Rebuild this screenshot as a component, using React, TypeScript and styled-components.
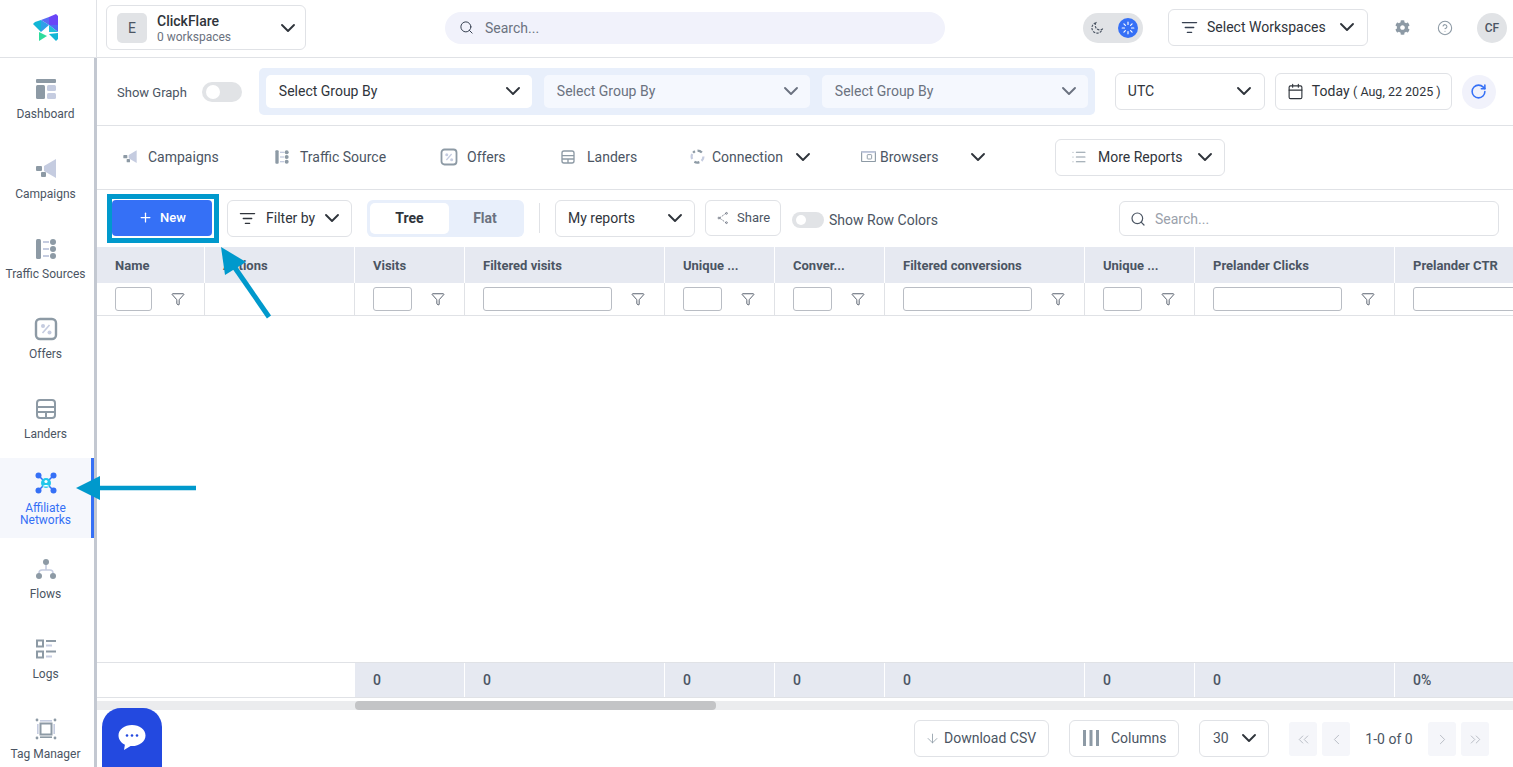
import React from "react";
import styled, { createGlobalStyle } from "styled-components";
import {
  ArrowDown,
  Calendar,
  ChevronDown,
  ChevronLeft,
  ChevronRight,
  ChevronsLeft,
  ChevronsRight,
  CircleHelp,
  Funnel,
  List,
  ListFilter,
  Plus,
  RotateCw,
  Search,
} from "lucide-react";
import { FaCog } from "react-icons/fa";

const dark = "#8d9aa5";
const light = "#c5cce0";
const blue = "#3570f6";
const line = "#e0e2e6";
const headBg = "#e6e9f1";
const textColor = "#4b5563";
const strong = "#2f343b";

const GlobalStyle = createGlobalStyle`
  html, body {
    margin: 0;
    height: 100%;
    overflow: hidden;
    background: #fff;
    font-family: Roboto, "Liberation Sans", sans-serif;
  }
  * { box-sizing: border-box; }
`;

const Page = styled.div`
  position: relative;
  width: 1513px;
  height: 767px;
  overflow: hidden;
  display: flex;
  flex-direction: column;
`;

// Shared chevron: drawn at 24px but takes the room of a 20px one
const Chevron = styled(ChevronDown).attrs({ size: 24, strokeWidth: 1.9 })`
  flex: none;
  margin: -2px;
`;

// Top bar
const TopBar = styled.header`
  height: 58px;
  flex: none;
  display: flex;
  align-items: center;
  padding-bottom: 2px;
  border-bottom: 1px solid ${line};
`;

const LogoCell = styled.div`
  width: 97px;
  height: 57px;
  flex: none;
  display: flex;
  align-items: center;
  justify-content: center;
  border-right: 1px solid ${line};
  margin-bottom: -2px;
  padding: 0 3px 2px 0;
`;

const OrgBox = styled.div`
  width: 200px;
  height: 45px;
  margin-left: 9px;
  display: flex;
  align-items: center;
  padding: 0 7px 0 10px;
  border: 1px solid ${line};
  border-radius: 6px;
`;

const OrgBadge = styled.div`
  width: 30px;
  height: 30px;
  border-radius: 5px;
  background: #e1e3e6;
  color: ${textColor};
  font-size: 14px;
  display: flex;
  align-items: center;
  justify-content: center;
  margin-right: 10px;
`;

const OrgText = styled.div`
  flex: 1;
  display: flex;
  flex-direction: column;
  padding-top: 3px;
`;

const OrgName = styled.span`
  font-size: 14px;
  line-height: 16px;
  font-weight: 500;
  color: ${strong};
`;

const OrgSub = styled.span`
  font-size: 12px;
  line-height: 16px;
  color: #6b7280;
`;

const GlobalSearch = styled.div`
  width: 500px;
  height: 32px;
  margin-left: 139px;
  display: flex;
  align-items: center;
  gap: 11px;
  padding-left: 14px;
  border-radius: 16px;
  background: #f1f2fb;
  color: #6b7280;
  font-size: 14px;
  svg { color: #374151; }
`;

const ThemeToggle = styled.div`
  width: 60px;
  height: 30px;
  margin-left: 138px;
  padding: 0 5px 0 7px;
  display: flex;
  align-items: center;
  justify-content: space-between;
  border-radius: 15px;
  background: #e1e3e6;
`;

const SunDot = styled.div`
  width: 20px;
  height: 20px;
  border-radius: 50%;
  background: ${blue};
  display: flex;
  align-items: center;
  justify-content: center;
`;

const OutlineBox = styled.div<{ $w: number; $h?: number; $pad?: string; $gap?: number }>`
  width: ${(p) => p.$w}px;
  height: ${(p) => p.$h ?? 37}px;
  flex: none;
  display: flex;
  align-items: center;
  gap: ${(p) => p.$gap ?? 0}px;
  padding: ${(p) => p.$pad ?? "0 12px"};
  border: 1px solid ${line};
  border-radius: 6px;
  background: #fff;
  color: ${strong};
  font-size: 14px;
  white-space: nowrap;
  svg { flex: none; }
`;

const Grow = styled.span<{ $ml?: number }>`
  flex: 1;
  margin-left: ${(p) => p.$ml ?? 0}px;
`;

const WorkspaceBox = styled(OutlineBox)`
  margin-left: 25px;
  svg.lead { color: #374151; }
`;

const GearWrap = styled.div`
  margin-left: 27px;
  display: flex;
  color: ${dark};
`;

const HelpWrap = styled.div`
  margin-left: 27px;
  display: flex;
  color: ${dark};
`;

const UserBadge = styled.div`
  width: 30px;
  height: 30px;
  margin-left: 24px;
  border-radius: 50%;
  background: #e1e3e6;
  color: ${textColor};
  font-size: 12px;
  font-weight: 500;
  display: flex;
  align-items: center;
  justify-content: center;
`;

// Sidebar
const Body = styled.div`
  flex: 1;
  display: flex;
  min-height: 0;
`;

const Sidebar = styled.nav`
  width: 97px;
  flex: none;
  overflow: hidden;
  border-right: 3px solid #c3c8d1;
`;

const SideItem = styled.div<{ $active?: boolean }>`
  height: 80px;
  display: flex;
  flex-direction: column;
  align-items: center;
  justify-content: center;
  gap: 7px;
  padding-top: 1px;
  font-size: 12px;
  line-height: 12px;
  text-align: center;
  color: ${(p) => (p.$active ? blue : textColor)};
  background: ${(p) => (p.$active ? "#f5f7fc" : "#fff")};
  border-right: 3px solid ${(p) => (p.$active ? blue : "transparent")};
  svg { flex: none; }
`;

// Main area
const Main = styled.main`
  flex: 1;
  min-width: 0;
  display: flex;
  flex-direction: column;
`;

const FilterBar = styled.div`
  height: 68px;
  flex: none;
  display: flex;
  align-items: center;
  padding-left: 20px;
  border-bottom: 1px solid ${line};
`;

const GraphLabel = styled.span`
  font-size: 13px;
  color: ${textColor};
  margin-top: 1px;
  margin-right: 15px;
`;

const Switch = styled.div<{ $w: number; $h: number }>`
  width: ${(p) => p.$w}px;
  height: ${(p) => p.$h}px;
  flex: none;
  border-radius: ${(p) => p.$h / 2}px;
  background: #e1e3e6;
  padding: 3px 4px;
  display: flex;
  &::before {
    content: "";
    width: ${(p) => p.$h - 6}px;
    height: ${(p) => p.$h - 6}px;
    border-radius: 50%;
    background: #fff;
  }
`;

const GroupPanel = styled.div`
  width: 836px;
  height: 47px;
  margin-left: 17px;
  margin-right: 20px;
  padding: 7px;
  display: flex;
  gap: 12px;
  background: #e8effb;
  border-radius: 5px;
`;

const GroupSelect = styled.div<{ $off?: boolean }>`
  flex: 1;
  display: flex;
  align-items: center;
  padding: 0 9px 1px 13px;
  border-radius: 5px;
  font-size: 14px;
  background: ${(p) => (p.$off ? "#f5f8fe" : "#fff")};
  color: ${(p) => (p.$off ? "#6b7280" : strong)};
`;

const DateBox = styled(OutlineBox)`
  margin-left: 10px;
`;

const DateSmall = styled.span`
  font-size: 12.5px;
`;

const RefreshButton = styled.div`
  width: 34px;
  height: 34px;
  margin-left: 10px;
  flex: none;
  border-radius: 50%;
  background: #f1f2fb;
  color: ${blue};
  display: flex;
  align-items: center;
  justify-content: center;
`;

const TabBar = styled.div`
  height: 64px;
  flex: none;
  display: flex;
  align-items: center;
  padding-left: 25px;
  border-bottom: 1px solid ${line};
`;

const Tab = styled.div<{ $w: number; $gap: number }>`
  width: ${(p) => p.$w}px;
  flex: none;
  display: flex;
  align-items: center;
  gap: ${(p) => p.$gap}px;
  padding-bottom: 2px;
  font-size: 14px;
  color: ${textColor};
`;

const TabChevron = styled.span<{ $gap: number }>`
  display: flex;
  margin-left: ${(p) => p.$gap}px;
  color: ${strong};
`;

const Toolbar = styled.div`
  height: 57px;
  flex: none;
  display: flex;
  align-items: center;
  padding: 0 14px 1px 10px;
`;

const Highlight = styled.div`
  width: 112px;
  height: 49px;
  flex: none;
  margin-right: 8px;
  padding: 1px 2px 2px 0;
  border: 5px solid #0099cc;
`;

const NewButton = styled.div`
  width: 100%;
  height: 100%;
  border-radius: 4px;
  background: ${blue};
  color: #fff;
  font-size: 13px;
  font-weight: 500;
  display: flex;
  align-items: center;
  justify-content: center;
  gap: 7px;
`;

const ViewSwitch = styled.div`
  width: 157px;
  height: 37px;
  margin-left: 15px;
  padding: 3px;
  flex: none;
  display: flex;
  border-radius: 6px;
  background: #e8effb;
`;

const ViewOption = styled.div<{ $on?: boolean }>`
  width: ${(p) => (p.$on ? 79 : 72)}px;
  display: flex;
  align-items: center;
  justify-content: center;
  border-radius: 5px;
  font-size: 14px;
  font-weight: 700;
  color: ${(p) => (p.$on ? strong : "#6b7280")};
  background: ${(p) => (p.$on ? "#fff" : "transparent")};
`;

const VDivider = styled.div`
  width: 1px;
  height: 30px;
  margin: 0 15px;
  flex: none;
  background: ${line};
`;

const ShareBox = styled(OutlineBox)`
  margin-left: 10px;
  font-size: 13px;
  color: ${textColor};
`;

const RowColors = styled.div`
  display: flex;
  align-items: center;
  gap: 5px;
  margin-left: 11px;
  margin-top: 3px;
  font-size: 14px;
  color: ${textColor};
`;

const TableSearch = styled(OutlineBox)`
  margin-left: auto;
  margin-top: 1px;
  color: #9aa1ab;
  svg { color: #4b5563; }
`;

// Table
const TableArea = styled.div`
  flex: 1;
  min-height: 0;
  overflow: hidden;
  display: flex;
  flex-direction: column;
`;

const Row = styled.div`
  display: grid;
  grid-template-columns: 108px 150px 110px 200px 110px 110px 200px 110px 200px 200px;
  width: 1498px;
  flex: none;
`;

const HeadCell = styled.div`
  height: 36px;
  padding-left: 18px;
  display: flex;
  align-items: center;
  background: ${headBg};
  border-right: 1px solid #fff;
  font-size: 13px;
  font-weight: 700;
  color: ${textColor};
  white-space: nowrap;
`;

const FilterRow = styled(Row)`
  border-bottom: 1px solid ${line};
`;

const FilterCell = styled.div`
  height: 32px;
  padding: 0 19px 0 18px;
  display: flex;
  align-items: center;
  gap: 19px;
  border-right: 1px solid ${line};
  color: #374151;
  svg { flex: none; }
`;

const FilterInput = styled.div`
  flex: 1;
  height: 24px;
  border: 1px solid #b9bdc4;
  border-radius: 3px;
`;

const Spacer = styled.div`
  flex: 1;
`;

const TotalsRow = styled(Row)`
  border-top: 1px solid ${line};
  border-bottom: 1px solid ${line};
`;

const TotalCell = styled.div<{ $blank?: boolean }>`
  height: 34px;
  padding-left: 18px;
  display: flex;
  align-items: center;
  background: ${(p) => (p.$blank ? "#fff" : headBg)};
  border-right: 1px solid ${(p) => (p.$blank ? "transparent" : "#fff")};
  font-size: 14px;
  font-weight: 500;
  color: ${textColor};
`;

const ScrollTrack = styled.div`
  height: 9px;
  margin-top: 3px;
  flex: none;
  background: #ebecee;
  padding-left: 258px;
`;

const ScrollThumb = styled.div`
  width: 361px;
  height: 9px;
  border-radius: 4px;
  background: #c3c4c6;
`;

const Footer = styled.div`
  height: 57px;
  flex: none;
  display: flex;
  align-items: center;
  justify-content: flex-end;
  padding: 0 24px 0 0;
`;

const FootButton = styled(OutlineBox)`
  margin-right: 20px;
  color: ${textColor};
`;

const Pager = styled.div<{ $narrow?: boolean }>`
  width: 28px;
  height: 34px;
  flex: none;
  margin-top: 1px;
  margin-left: ${(p) => (p.$narrow ? 5 : 0)}px;
  background: #f5f6fa;
  border-radius: 3px;
  color: #b5b9c2;
  display: flex;
  align-items: center;
  justify-content: center;
`;

const PageCount = styled.span`
  width: 78px;
  text-align: center;
  font-size: 14px;
  color: ${textColor};
`;

// Things that lie over the page
const ChatBubble = styled.div`
  position: absolute;
  left: 102px;
  top: 708px;
  width: 60px;
  height: 59px;
  background: #2349e0;
  border-radius: 19px 19px 0 0;
  display: flex;
  align-items: center;
  justify-content: center;
  padding-bottom: 2px;
`;

const Annotations = styled.svg`
  position: absolute;
  inset: 0;
  pointer-events: none;
`;

type IconProps = { size?: number };

const Logo = () => (
  <svg width="27" height="28" viewBox="0 0 27 28">
    <polygon points="0,10 2,8 8,6 8,18 5,15" fill="#12b6d6" />
    <polygon points="8,6 16,3 16,11" fill="#5a6cf5" />
    <polygon points="8,6 16,11 8,18" fill="#2f9fe8" />
    <polygon points="16,3 23,0 25,2 25,11 16,11" fill="#6a45f7" />
    <polygon points="16,11 25,11 25,18" fill="#4f6af5" />
    <polygon points="16,11 25,18 16,18" fill="#22c0d8" />
    <polygon points="16,20 25,19 25,25 23,27" fill="#12b6d6" />
    <polygon points="6,18 14,22 6,27" fill="#2edc9c" />
  </svg>
);

const DashboardIcon = ({ size = 24 }: IconProps) => (
  <svg width={size} height={size} viewBox="0 0 24 24">
    <rect x="2" y="2" width="20" height="4" rx="1" fill={dark} />
    <rect x="2" y="8" width="9" height="14" rx="1.5" fill={dark} />
    <rect x="13" y="8" width="9" height="6" rx="1.5" fill={light} />
    <rect x="13" y="16" width="9" height="6" rx="1.5" fill={light} />
  </svg>
);

const CampaignIcon = ({ size = 24 }: IconProps) => (
  <svg width={size} height={size} viewBox="0 0 24 24">
    <polygon points="10,9 22,2 22,21 10,14" fill={light} />
    <rect x="2" y="9" width="6" height="5" rx="1" fill={dark} />
    <rect x="7" y="15" width="5" height="5" rx="1" fill={dark} />
  </svg>
);

const TrafficIcon = ({ size = 24 }: IconProps) => (
  <svg width={size} height={size} viewBox="0 0 24 24">
    <rect x="2" y="2" width="5" height="20" rx="1.5" fill={dark} />
    <rect x="9" y="4" width="6" height="2" fill={light} />
    <rect x="9" y="11" width="6" height="2" fill={light} />
    <rect x="9" y="18" width="6" height="2" fill={light} />
    <circle cx="19" cy="5" r="3" fill={dark} />
    <circle cx="19" cy="12" r="3" fill={dark} />
    <circle cx="19" cy="19" r="3" fill={dark} />
  </svg>
);

const OfferIcon = ({ size = 24 }: IconProps) => (
  <svg width={size} height={size} viewBox="0 0 24 24">
    <rect x="2" y="2" width="20" height="20" rx="4" fill="none" stroke={dark} strokeWidth="2.4" />
    <circle cx="9" cy="9" r="2" fill={light} />
    <circle cx="15.5" cy="15.5" r="2" fill={light} />
    <path d="M15.5 8 8.5 16" stroke={light} strokeWidth="1.6" />
  </svg>
);

const LanderIcon = ({ size = 24 }: IconProps) => (
  <svg width={size} height={size} viewBox="0 0 24 24">
    <rect x="3" y="3" width="18" height="18" rx="3" fill="none" stroke={dark} strokeWidth="2" />
    <path d="M3 10h18M3 15h18M12 15v6" stroke={dark} strokeWidth="2" />
  </svg>
);

const NetworkIcon = () => (
  <svg width="24" height="24" viewBox="0 0 24 24">
    <path d="M4 4 20 20M20 4 4 20" stroke={blue} strokeWidth="1.6" />
    <circle cx="4.5" cy="4.5" r="3" fill={blue} />
    <circle cx="19.5" cy="4.5" r="3" fill={blue} />
    <circle cx="4.5" cy="19.5" r="3" fill={blue} />
    <circle cx="19.5" cy="19.5" r="3" fill={blue} />
    <circle cx="12" cy="12" r="5" fill="#22c8ea" />
    <circle cx="12" cy="10.5" r="1.6" fill="#fff" />
    <path d="M8.8 15.5c.6-2 5.8-2 6.4 0" fill="#fff" />
  </svg>
);

const FlowIcon = () => (
  <svg width="24" height="24" viewBox="0 0 24 24">
    <path d="M12 6v7M5 19v-3a3 3 0 0 1 3-3h8a3 3 0 0 1 3 3v3" fill="none" stroke={light} strokeWidth="1.6" />
    <circle cx="12" cy="5" r="3" fill={dark} />
    <circle cx="5" cy="19" r="3" fill={dark} />
    <circle cx="19" cy="19" r="3" fill={dark} />
  </svg>
);

const LogIcon = () => (
  <svg width="24" height="24" viewBox="0 0 24 24">
    <rect x="3" y="3.5" width="6" height="6" fill="none" stroke={dark} strokeWidth="2" />
    <rect x="3" y="14.5" width="6" height="6" fill="none" stroke={dark} strokeWidth="2" />
    <path d="M12 4h10M12 14.5h10" stroke={dark} strokeWidth="1.8" />
    <path d="M12 8.5h6M12 19.5h6" stroke={light} strokeWidth="1.8" />
  </svg>
);

const TagIcon = () => (
  <svg width="24" height="24" viewBox="0 0 24 24">
    <rect x="6.5" y="6.5" width="11" height="11" fill="none" stroke={dark} strokeWidth="2" />
    <rect x="6" y="3" width="12" height="1.6" fill={light} />
    <rect x="6" y="19.4" width="12" height="1.6" fill={dark} />
    <rect x="3" y="7" width="1.6" height="10" fill={light} />
    <rect x="19.4" y="7" width="1.6" height="10" fill={light} />
    <circle cx="3" cy="3" r="1.4" fill={dark} />
    <circle cx="21" cy="3" r="1.4" fill={dark} />
    <circle cx="3" cy="21" r="1.4" fill={dark} />
    <circle cx="21" cy="21" r="1.4" fill={dark} />
  </svg>
);

const ConnectionIcon = () => (
  <svg width="15" height="15" viewBox="0 0 24 24" fill="none" strokeWidth="3.6">
    <path d="M12 2.5A9.5 9.5 0 0 1 19 5.5" stroke={dark} />
    <path d="M21.5 12a9.5 9.5 0 0 1-3 7" stroke={light} />
    <path d="M15 21a9.5 9.5 0 0 1-8 -.5" stroke={dark} />
    <path d="M3.5 16a9.5 9.5 0 0 1 0 -8" stroke={light} />
    <path d="M5 6a9.5 9.5 0 0 1 3-2.5" stroke={dark} />
  </svg>
);

const BrowserIcon = () => (
  <svg width="15" height="15" viewBox="0 0 24 24" fill="none">
    <rect x="1" y="4" width="22" height="16" rx="1" stroke={dark} strokeWidth="1.8" />
    <path d="M1 5h22" stroke={light} strokeWidth="3" />
    <rect x="10" y="9" width="7" height="7" rx="1" stroke={dark} strokeWidth="1.5" />
  </svg>
);

const MoonIcon = () => (
  <svg width="14" height="14" viewBox="0 0 24 24" fill="none" stroke="#4b5563" strokeWidth="2" strokeDasharray="4 2">
    <path d="M10 3a9 9 0 1 0 11 11 8 8 0 0 1-11-11z" />
  </svg>
);

const SunIcon = () => (
  <svg width="14" height="14" viewBox="0 0 24 24" stroke="#fff" strokeWidth="2" strokeLinecap="round">
    <path d="M12 2v4M12 18v4M2 12h4M18 12h4M5 5l2.5 2.5M16.5 16.5 19 19M5 19l2.5-2.5M16.5 7.5 19 5" />
  </svg>
);

const ShareIcon = () => (
  <svg width="14" height="14" viewBox="0 0 24 24" fill="none" stroke="#6b7280" strokeWidth="1.5">
    <path d="M17 4 6 12l11 8" strokeDasharray="3 2" />
    <circle cx="18" cy="4" r="1.5" />
    <circle cx="5" cy="12" r="1.5" />
    <circle cx="18" cy="20" r="1.5" />
  </svg>
);

const ColumnsIcon = () => (
  <svg width="16" height="16" viewBox="0 0 16 16" fill={dark}>
    <rect x="0" y="0" width="3" height="16" />
    <rect x="6.5" y="0" width="3" height="16" />
    <rect x="13" y="0" width="3" height="16" />
  </svg>
);

const ChatIcon = () => (
  <svg width="30" height="30" viewBox="0 0 30 30">
    <path d="M15 3C7.5 3 1.5 7.5 1.5 13.5c0 4.2 3 7.6 6.4 9.2L7 28l6.6-4c.5 0 1 .1 1.4.1 7.5 0 13.5-4.7 13.5-10.6S22.5 3 15 3z" fill="#fff" />
    <circle cx="10" cy="13.5" r="1.3" fill="#2349e0" />
    <circle cx="15" cy="13.5" r="1.3" fill="#2349e0" />
    <circle cx="20" cy="13.5" r="1.3" fill="#2349e0" />
  </svg>
);

const sideItems = [
  { label: "Dashboard", icon: <DashboardIcon /> },
  { label: "Campaigns", icon: <CampaignIcon /> },
  { label: "Traffic Sources", icon: <TrafficIcon /> },
  { label: "Offers", icon: <OfferIcon /> },
  { label: "Landers", icon: <LanderIcon /> },
  { label: "Affiliate Networks", icon: <NetworkIcon />, active: true },
  { label: "Flows", icon: <FlowIcon /> },
  { label: "Logs", icon: <LogIcon /> },
  { label: "Tag Manager", icon: <TagIcon /> },
];

const columns = [
  "Name",
  "Actions",
  "Visits",
  "Filtered visits",
  "Unique ...",
  "Conver...",
  "Filtered conversions",
  "Unique ...",
  "Prelander Clicks",
  "Prelander CTR",
];

const totals = ["0", "0", "0", "0", "0", "0", "0", "0%"];

export default function App() {
  return (
    <Page>
      <GlobalStyle />
      <TopBar>
        <LogoCell>
          <Logo />
        </LogoCell>
        <OrgBox>
          <OrgBadge>E</OrgBadge>
          <OrgText>
            <OrgName>ClickFlare</OrgName>
            <OrgSub>0 workspaces</OrgSub>
          </OrgText>
          <Chevron color={strong} />
        </OrgBox>
        <GlobalSearch>
          <Search size={15} strokeWidth={1.6} />
          Search...
        </GlobalSearch>
        <ThemeToggle>
          <MoonIcon />
          <SunDot>
            <SunIcon />
          </SunDot>
        </ThemeToggle>
        <WorkspaceBox $w={200} $pad="0 10px 1px 12px">
          <ListFilter className="lead" size={17} strokeWidth={1.8} />
          <Grow $ml={9}>Select Workspaces</Grow>
          <Chevron />
        </WorkspaceBox>
        <GearWrap>
          <FaCog size={15} />
        </GearWrap>
        <HelpWrap>
          <CircleHelp size={16} strokeWidth={1.6} />
        </HelpWrap>
        <UserBadge>CF</UserBadge>
      </TopBar>
      <Body>
        <Sidebar>
          {sideItems.map((item) => (
            <SideItem key={item.label} $active={item.active}>
              {item.icon}
              <span>{item.label}</span>
            </SideItem>
          ))}
        </Sidebar>
        <Main>
          <FilterBar>
            <GraphLabel>Show Graph</GraphLabel>
            <Switch $w={40} $h={20} />
            <GroupPanel>
              <GroupSelect>
                <Grow>Select Group By</Grow>
                <Chevron />
              </GroupSelect>
              <GroupSelect $off>
                <Grow>Select Group By</Grow>
                <Chevron color="#6b7280" />
              </GroupSelect>
              <GroupSelect $off>
                <Grow>Select Group By</Grow>
                <Chevron color="#6b7280" />
              </GroupSelect>
            </GroupPanel>
            <OutlineBox $w={150} $pad="0 10px 1px 12px">
              <Grow>UTC</Grow>
              <Chevron />
            </OutlineBox>
            <DateBox $w={177} $gap={8} $pad="0 10px 1px 11px">
              <Calendar size={17} strokeWidth={1.6} />
              <span>
                Today <DateSmall>( Aug, 22 2025 )</DateSmall>
              </span>
            </DateBox>
            <RefreshButton>
              <RotateCw size={17} strokeWidth={2.2} />
            </RefreshButton>
          </FilterBar>
          <TabBar>
            <Tab $w={152} $gap={10}>
              <CampaignIcon size={16} />
              Campaigns
            </Tab>
            <Tab $w={166} $gap={10}>
              <TrafficIcon size={16} />
              Traffic Source
            </Tab>
            <Tab $w={120} $gap={9}>
              <OfferIcon size={18} />
              Offers
            </Tab>
            <Tab $w={130} $gap={11}>
              <LanderIcon size={16} />
              Landers
            </Tab>
            <Tab $w={171} $gap={7}>
              <ConnectionIcon />
              Connection
              <TabChevron $gap={3}>
                <Chevron />
              </TabChevron>
            </Tab>
            <Tab $w={194} $gap={4}>
              <BrowserIcon />
              Browsers
              <TabChevron $gap={26}>
                <Chevron />
              </TabChevron>
            </Tab>
            <OutlineBox $w={170} $pad="0 9px 1px 15px">
              <List size={16} strokeWidth={1.6} color={dark} />
              <Grow $ml={11}>More Reports</Grow>
              <Chevron />
            </OutlineBox>
          </TabBar>
          <Toolbar>
            <Highlight>
              <NewButton>
                <Plus size={15} strokeWidth={2} />
                New
              </NewButton>
            </Highlight>
            <OutlineBox $w={125} $pad="0 9px 0 11px">
              <ListFilter size={17} strokeWidth={1.8} />
              <Grow $ml={10}>Filter by</Grow>
              <Chevron />
            </OutlineBox>
            <ViewSwitch>
              <ViewOption $on>Tree</ViewOption>
              <ViewOption>Flat</ViewOption>
            </ViewSwitch>
            <VDivider />
            <OutlineBox $w={140} $pad="0 9px 0 12px">
              <Grow>My reports</Grow>
              <Chevron />
            </OutlineBox>
            <ShareBox $w={76} $h={36} $gap={7} $pad="0 0 1px 10px">
              <ShareIcon />
              Share
            </ShareBox>
            <RowColors>
              <Switch $w={32} $h={16} />
              Show Row Colors
            </RowColors>
            <TableSearch $w={380} $h={35} $gap={9} $pad="0 0 0 10px">
              <Search size={16} strokeWidth={1.8} />
              Search...
            </TableSearch>
          </Toolbar>
          <TableArea>
            <Row>
              {columns.map((c, i) => (
                <HeadCell key={i}>{c}</HeadCell>
              ))}
            </Row>
            <FilterRow>
              {columns.map((c, i) =>
                c === "Actions" ? (
                  <FilterCell key={i} />
                ) : (
                  <FilterCell key={i}>
                    <FilterInput />
                    <Funnel size={14} strokeWidth={1.4} />
                  </FilterCell>
                ),
              )}
            </FilterRow>
            <Spacer />
            <TotalsRow>
              <TotalCell $blank />
              <TotalCell $blank />
              {totals.map((t, i) => (
                <TotalCell key={i}>{t}</TotalCell>
              ))}
            </TotalsRow>
            <ScrollTrack>
              <ScrollThumb />
            </ScrollTrack>
          </TableArea>
          <Footer>
            <FootButton $w={135} $gap={4} $pad="0 0 1px 10px">
              <ArrowDown size={15} strokeWidth={1.3} color={dark} />
              Download CSV
            </FootButton>
            <FootButton $w={110} $gap={12} $pad="0 0 1px 13px">
              <ColumnsIcon />
              Columns
            </FootButton>
            <FootButton $w={70} $pad="0 9px 1px 13px">
              <Grow>30</Grow>
              <Chevron color={strong} />
            </FootButton>
            <Pager>
              <ChevronsLeft size={17} strokeWidth={1.3} />
            </Pager>
            <Pager $narrow>
              <ChevronLeft size={17} strokeWidth={1.3} />
            </Pager>
            <PageCount>1-0 of 0</PageCount>
            <Pager>
              <ChevronRight size={17} strokeWidth={1.3} />
            </Pager>
            <Pager $narrow>
              <ChevronsRight size={17} strokeWidth={1.3} />
            </Pager>
          </Footer>
        </Main>
      </Body>
      <ChatBubble>
        <ChatIcon />
      </ChatBubble>
      <Annotations width="1513" height="767" viewBox="0 0 1513 767">
        <path d="M233 265 269 317" stroke="#0099cc" strokeWidth="5" />
        <polygon points="221,247 246,262 225,275" fill="#0099cc" />
        <path d="M98 488H196" stroke="#0099cc" strokeWidth="4.5" />
        <polygon points="76,488 100,476 100,500" fill="#0099cc" />
      </Annotations>
    </Page>
  );
}
